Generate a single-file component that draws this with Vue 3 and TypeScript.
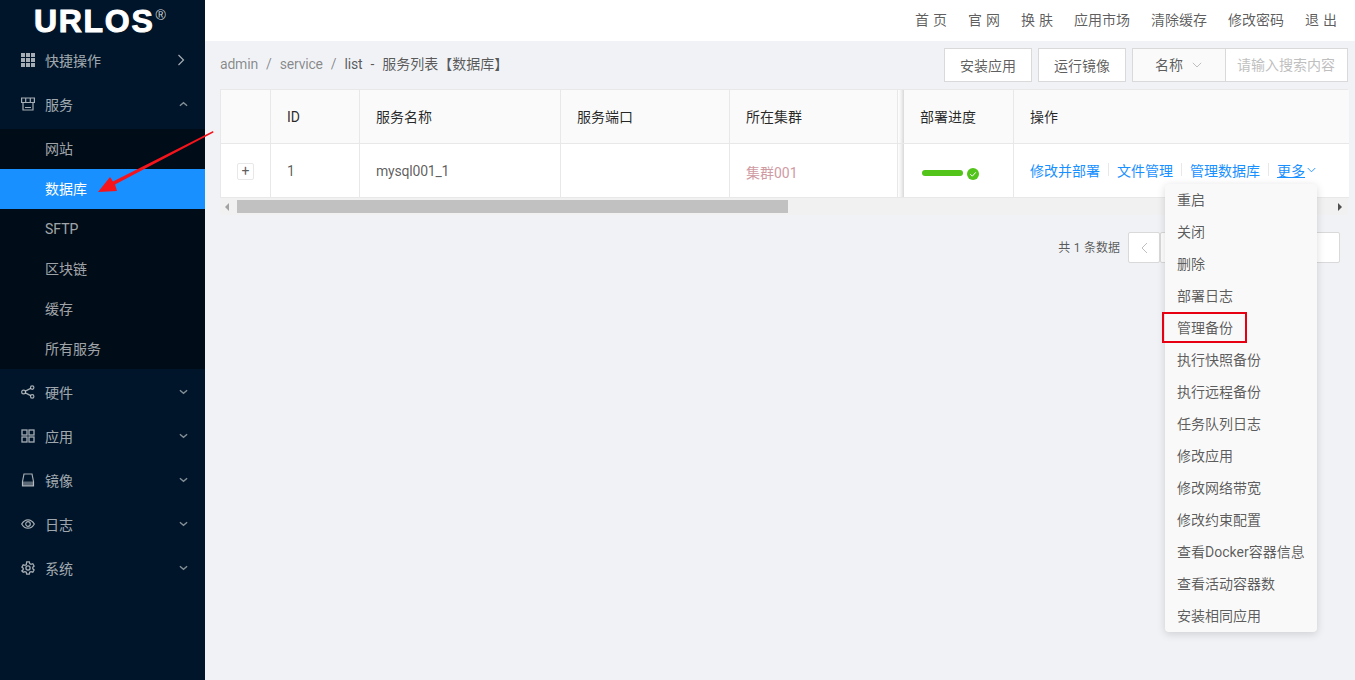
<script setup lang="ts">
const topNav: string[] = ['首 页', '官 网', '换 肤', '应用市场', '清除缓存', '修改密码', '退 出']
const subItems: string[] = ['网站', '数据库', 'SFTP', '区块链', '缓存', '所有服务']
const lowerItems = [
  { key: 'share', label: '硬件' },
  { key: 'grid', label: '应用' },
  { key: 'hdd', label: '镜像' },
  { key: 'eye', label: '日志' },
  { key: 'gear', label: '系统' },
]
const links: string[] = ['修改并部署', '文件管理', '管理数据库']
const menu: string[] = ['重启', '关闭', '删除', '部署日志', '管理备份', '执行快照备份', '执行远程备份', '任务队列日志', '修改应用', '修改网络带宽', '修改约束配置', '查看Docker容器信息', '查看活动容器数', '安装相同应用']
</script>

<template>
  <div class="app">
    <aside class="side">
      <div class="logo"><span class="logo-text">URLOS</span><span class="reg">®</span></div>
      <div class="item first">
        <svg class="ic" viewBox="0 0 14 14"><g fill="currentColor"><rect x="0" y="0" width="4" height="4"/><rect x="5" y="0" width="4" height="4"/><rect x="10" y="0" width="4" height="4"/><rect x="0" y="5" width="4" height="4"/><rect x="5" y="5" width="4" height="4"/><rect x="10" y="5" width="4" height="4"/><rect x="0" y="10" width="4" height="4"/><rect x="5" y="10" width="4" height="4"/><rect x="10" y="10" width="4" height="4"/></g></svg>
        <span>快捷操作</span>
        <svg class="chev-r" viewBox="0 0 8 12"><path d="M1.500 1l5 5-5 5" fill="none" stroke="currentColor" stroke-width="1.200"/></svg>
      </div>
      <div class="item">
        <svg class="ic" viewBox="0 0 14 14"><path d="M.6 1h12.800v4.500H.6zM4.700 1v4.500M9.300 1v4.500M2 5.500v7.500h10V5.500M4 10.500h6" fill="none" stroke="currentColor" stroke-width="1.200"/></svg>
        <span>服务</span>
        <svg class="chev" viewBox="0 0 10 6"><path d="M1 5l4-3.500L9 5" fill="none" stroke="currentColor" stroke-width="1.500"/></svg>
      </div>
      <ul class="sub">
        <li v-for="s in subItems" :key="s" :class="{ active: s === '数据库' }">{{ s }}</li>
      </ul>
      <div v-for="it in lowerItems" :key="it.key" class="item">
        <svg v-if="it.key === 'share'" class="ic" viewBox="0 0 14 14"><g fill="none" stroke="currentColor" stroke-width="1.200"><circle cx="2.600" cy="7" r="1.900"/><circle cx="11.200" cy="2.600" r="1.700"/><circle cx="11.200" cy="11.400" r="1.700"/><path d="M4.300 6.100l5.400-2.700M4.300 7.900l5.400 2.700"/></g></svg>
        <svg v-else-if="it.key === 'grid'" class="ic" viewBox="0 0 14 14"><g fill="none" stroke="currentColor" stroke-width="1.300"><rect x="1" y="1" width="5" height="5"/><rect x="8" y="1" width="5" height="5"/><rect x="1" y="8" width="5" height="5"/><rect x="8" y="8" width="5" height="5"/></g></svg>
        <svg v-else-if="it.key === 'hdd'" class="ic" viewBox="0 0 14 14"><path d="M3 1h8l1.500 7.500V13h-11V8.500z" fill="none" stroke="currentColor" stroke-width="1.200"/><rect x="1.500" y="8.500" width="11" height="4.500" fill="currentColor" opacity=".55"/></svg>
        <svg v-else-if="it.key === 'eye'" class="ic" viewBox="0 0 14 14"><g fill="none" stroke="currentColor" stroke-width="1.200"><path d="M.7 7C2.400 4 4.500 2.800 7 2.800S11.600 4 13.300 7c-1.700 3-3.800 4.200-6.300 4.200S2.400 10 .7 7z"/><circle cx="7" cy="7" r="2.300"/></g></svg>
        <svg v-else class="ic" viewBox="0 0 14 14"><g fill="none" stroke="currentColor" stroke-width="1.300"><path d="M5.700.8h2.600l.4 1.800 1.300.7 1.800-.6 1.300 2.300-1.300 1.200v1.500l1.300 1.200-1.300 2.300-1.800-.6-1.300.7-.4 1.800H5.700l-.4-1.800-1.300-.7-1.800.6L.9 9.900l1.300-1.200V7.300L.9 6.100 2.200 3.800l1.800.6 1.300-.7z"/><circle cx="7" cy="7" r="2.100"/></g></svg>
        <span>{{ it.label }}</span>
        <svg class="chev" viewBox="0 0 10 6"><path d="M1 1l4 3.500L9 1" fill="none" stroke="currentColor" stroke-width="1.500"/></svg>
      </div>
    </aside>

    <div class="main">
      <header class="top">
        <a v-for="t in topNav" :key="t">{{ t }}</a>
      </header>

      <section class="content">
        <div class="toolbar">
          <div class="crumb">
            <span class="lat">admin</span><i>/</i><span class="lat">service</span><i>/</i><span class="dark lat">list</span><i class="dash">-</i><span class="dark title">服务列表【数据库】</span>
          </div>
          <div class="tools">
            <button class="btn">安装应用</button>
            <button class="btn">运行镜像</button>
            <div class="search">
              <div class="select"><span class="sel-text">名称</span>
                <svg viewBox="0 0 10 6"><path d="M.8.8L5 5 9.200.8" fill="none" stroke="currentColor"/></svg>
              </div>
              <div class="input">请输入搜索内容</div>
            </div>
          </div>
        </div>

        <div class="table">
          <div class="cell head"></div>
          <div class="cell head">ID</div>
          <div class="cell head cjk">服务名称</div>
          <div class="cell head cjk">服务端口</div>
          <div class="cell head cjk">所在集群</div>
          <div class="shadow"></div>
          <div class="cell head cjk fx">部署进度</div>
          <div class="cell head cjk last">操作</div>

          <div class="cell row plus-cell"><span class="plus">+</span></div>
          <div class="cell row">1</div>
          <div class="cell row lat">mysql001_1</div>
          <div class="cell row"></div>
          <div class="cell row cluster">集群001</div>
          <div class="shadow"></div>
          <div class="cell row fx prog">
            <span class="bar"></span>
            <svg class="ok" viewBox="0 0 12 12"><circle cx="6" cy="6" r="6" fill="#52c41a"/><path d="M3.300 6.200l2 2 3.500-3.900" fill="none" stroke="#fff"/></svg>
          </div>
          <div class="cell row last ops">
            <template v-for="l in links" :key="l">
              <a>{{ l }}</a><i class="sep"></i>
            </template>
            <a class="more">更多</a>
            <svg class="more-ic" viewBox="0 0 10 6"><path d="M.8.8L5 5 9.200.8" fill="none" stroke="currentColor"/></svg>
          </div>
        </div>

        <div class="scroll">
          <span class="tri left"></span>
          <div class="thumb"></div>
          <span class="tri right"></span>
        </div>

        <div class="pager">
          <span class="total">共 1 条数据</span>
          <span class="pg">
            <svg viewBox="0 0 7 12"><path d="M6 1L1 6l5 5" fill="none" stroke="currentColor"/></svg>
          </span>
          <span class="pg wide"></span>
        </div>
      </section>
    </div>

    <ul class="drop">
      <li v-for="m in menu" :key="m">{{ m }}</li>
    </ul>
    <div class="mark"></div>
    <svg class="arrow" viewBox="0 0 1355 680"><polygon points="213,131 213.500,132.500 115,184.500 117,191 98,192 110,177 113,181.500" fill="#f5141b"/></svg>
  </div>
</template>

<style>
html, body { margin: 0; background: #f0f2f5; }
</style>

<style scoped>
.app {
  position: relative;
  display: flex;
  width: 1355px;
  height: 680px;
  overflow: hidden;
  font-family: Roboto, "Noto Sans CJK SC", sans-serif;
  font-size: 14px;
  color: rgba(0, 0, 0, .65);
  background: #f0f2f5;
}
.lat { letter-spacing: -.2px; }
.side { width: 205px; flex: none; background: #001529; color: rgba(255, 255, 255, .65); }
.logo { height: 39px; padding-left: 34px; box-sizing: border-box; display: flex; align-items: flex-start; color: #fff; }
.logo-text { font: 900 32px/42px "Liberation Sans", sans-serif; letter-spacing: 1.700px; -webkit-text-stroke: 1px #fff; }
.reg { font: 14px/16px "Liberation Sans", sans-serif; margin: 7px 0 0 1px; color: rgba(255,255,255,.8); }
.item { height: 44px; display: flex; align-items: center; padding: 0 0 2px 21px; box-sizing: border-box; position: relative; }
.item + .sub { margin-top: 2px; }
.sub + .item { margin-top: 2px; }
.ic { width: 14px; height: 14px; margin-right: 10px; flex: none; }
.chev { width: 9px; height: 6px; position: absolute; left: 179px; top: 18px; opacity: .8; }
.chev-r { width: 8px; height: 12px; position: absolute; left: 177px; top: 15px; }
.sub { list-style: none; margin: 0; padding: 0; background: #000c17; }
.sub li { height: 40px; line-height: 40px; padding-left: 45px; }
.sub li.active { background: #1890ff; color: #fff; }

.main { flex: 1; min-width: 0; display: flex; flex-direction: column; }
.top { height: 41px; background: #fff; flex: none; display: flex; justify-content: flex-end; align-items: center; gap: 21px; padding: 0 18px 4px 0; box-sizing: border-box; }
.top a { color: rgba(0, 0, 0, .65); white-space: pre; word-spacing: .5px; }

.content { padding: 7px 7px 0 15px; }
.toolbar { display: flex; justify-content: space-between; align-items: center; height: 34px; margin-bottom: 7px; }
.crumb { color: rgba(0, 0, 0, .45); padding-bottom: 5px; white-space: nowrap; }
.crumb i { font-style: normal; margin: 0 8px; }
.crumb .dash { color: rgba(0, 0, 0, .65); }
.crumb .dark { color: rgba(0, 0, 0, .65); }
.tools { display: flex; gap: 6px; }
.btn { width: 88px; height: 34px; background: #fff; border: 1px solid #d9d9d9; font: inherit; color: rgba(0, 0, 0, .65); padding: 0; }
.search { display: flex; height: 34px; }
.select { width: 94px; box-sizing: border-box; border: 1px solid #d9d9d9; background: #fafafa; display: flex; align-items: center; gap: 9px; padding-left: 22px; }
.sel-text { margin-top: -3px; }
.select svg { width: 10px; height: 6px; color: #bfbfbf; }
.input { width: 122px; box-sizing: border-box; border: 1px solid #d9d9d9; border-left: 0; background: #fff; color: #bfbfbf; line-height: 32px; padding-left: 11px; white-space: nowrap; }

.table {
  display: grid;
  grid-template-columns: 50px 89px 201px 169px 168px 6px 110px 335px;
  grid-template-rows: 54px 54px;
  background: #fff;
  border-top: 1px solid #e8e8e8;
  border-left: 1px solid #e8e8e8;
  width: 1127px;
}
.cell { border-right: 1px solid #e8e8e8; border-bottom: 1px solid #e8e8e8; display: flex; align-items: center; padding-left: 16px; box-sizing: border-box; white-space: nowrap; }
.head { background: #fafafa; color: rgba(0, 0, 0, .85); }
.head.cjk { padding-bottom: 2px; }
.row { background: #fff; }
.last { border-right: 0; }
.shadow { background: linear-gradient(90deg, #fff, #f2f2f2 50%, #d8d8d8); border-bottom: 1px solid #e8e8e8; }
.plus-cell { padding: 2px 0 0 16px; }
.plus { width: 17px; height: 17px; box-sizing: border-box; border: 1px solid #e8e8e8; background: #fff; border-radius: 2px; font-size: 14px; line-height: 14px; text-align: center; }
.cluster { color: #cf9ba3; padding-top: 2px; }
.prog { gap: 4px; padding-left: 18px; padding-top: 4px; }
.bar { width: 41px; height: 6px; border-radius: 3px; background: #52c41a; }
.ok { width: 12px; height: 12px; margin-top: 2px; }
.ops { padding-bottom: 2px; }
.ops a { color: #1890ff; }
.sep { width: 1px; height: 13px; background: #e8e8e8; margin: 0 8px; }
.ops .more { text-decoration: underline; }
.more-ic { width: 9px; height: 6px; margin-left: 2px; color: #1890ff; }

.scroll { height: 17px; background: #f1f1f1; display: flex; align-items: center; position: relative; padding-left: 17px; }
.thumb { width: 551px; height: 13px; background: #c1c1c1; }
.tri { position: absolute; top: 5px; width: 0; height: 0; border: 4px solid transparent; }
.tri.left { left: 5px; border-left: 0; border-right: 4px solid #a3a3a3; }
.tri.right { right: 6px; border-right: 0; border-left: 4px solid #505050; }

.pager { display: flex; align-items: center; margin-top: 17px; padding-right: 8px; justify-content: flex-end; height: 31px; }
.total { font-size: 12px; margin-right: 8px; padding-bottom: 3px; word-spacing: .5px; }
.pg { width: 32px; height: 31px; box-sizing: border-box; border: 1px solid #d9d9d9; border-radius: 2px; background: #fff; display: flex; align-items: center; justify-content: center; color: #bfbfbf; }
.pg svg { width: 7px; height: 12px; }
.pg.wide { width: 180px; }

.drop { position: absolute; left: 1165px; top: 184px; width: 152px; margin: 0; padding: 0; list-style: none; background: #f9f9f9; border-radius: 4px; box-shadow: 0 2px 8px rgba(0, 0, 0, .15); }
.drop li { height: 32px; line-height: 32px; padding-left: 12px; white-space: nowrap; color: rgba(0,0,0,.65); }
.mark { position: absolute; left: 1162px; top: 312px; width: 85px; height: 31px; box-sizing: border-box; border: 2px solid #e60012; }
.arrow { position: absolute; left: 0; top: 0; width: 1355px; height: 680px; pointer-events: none; }
</style>
